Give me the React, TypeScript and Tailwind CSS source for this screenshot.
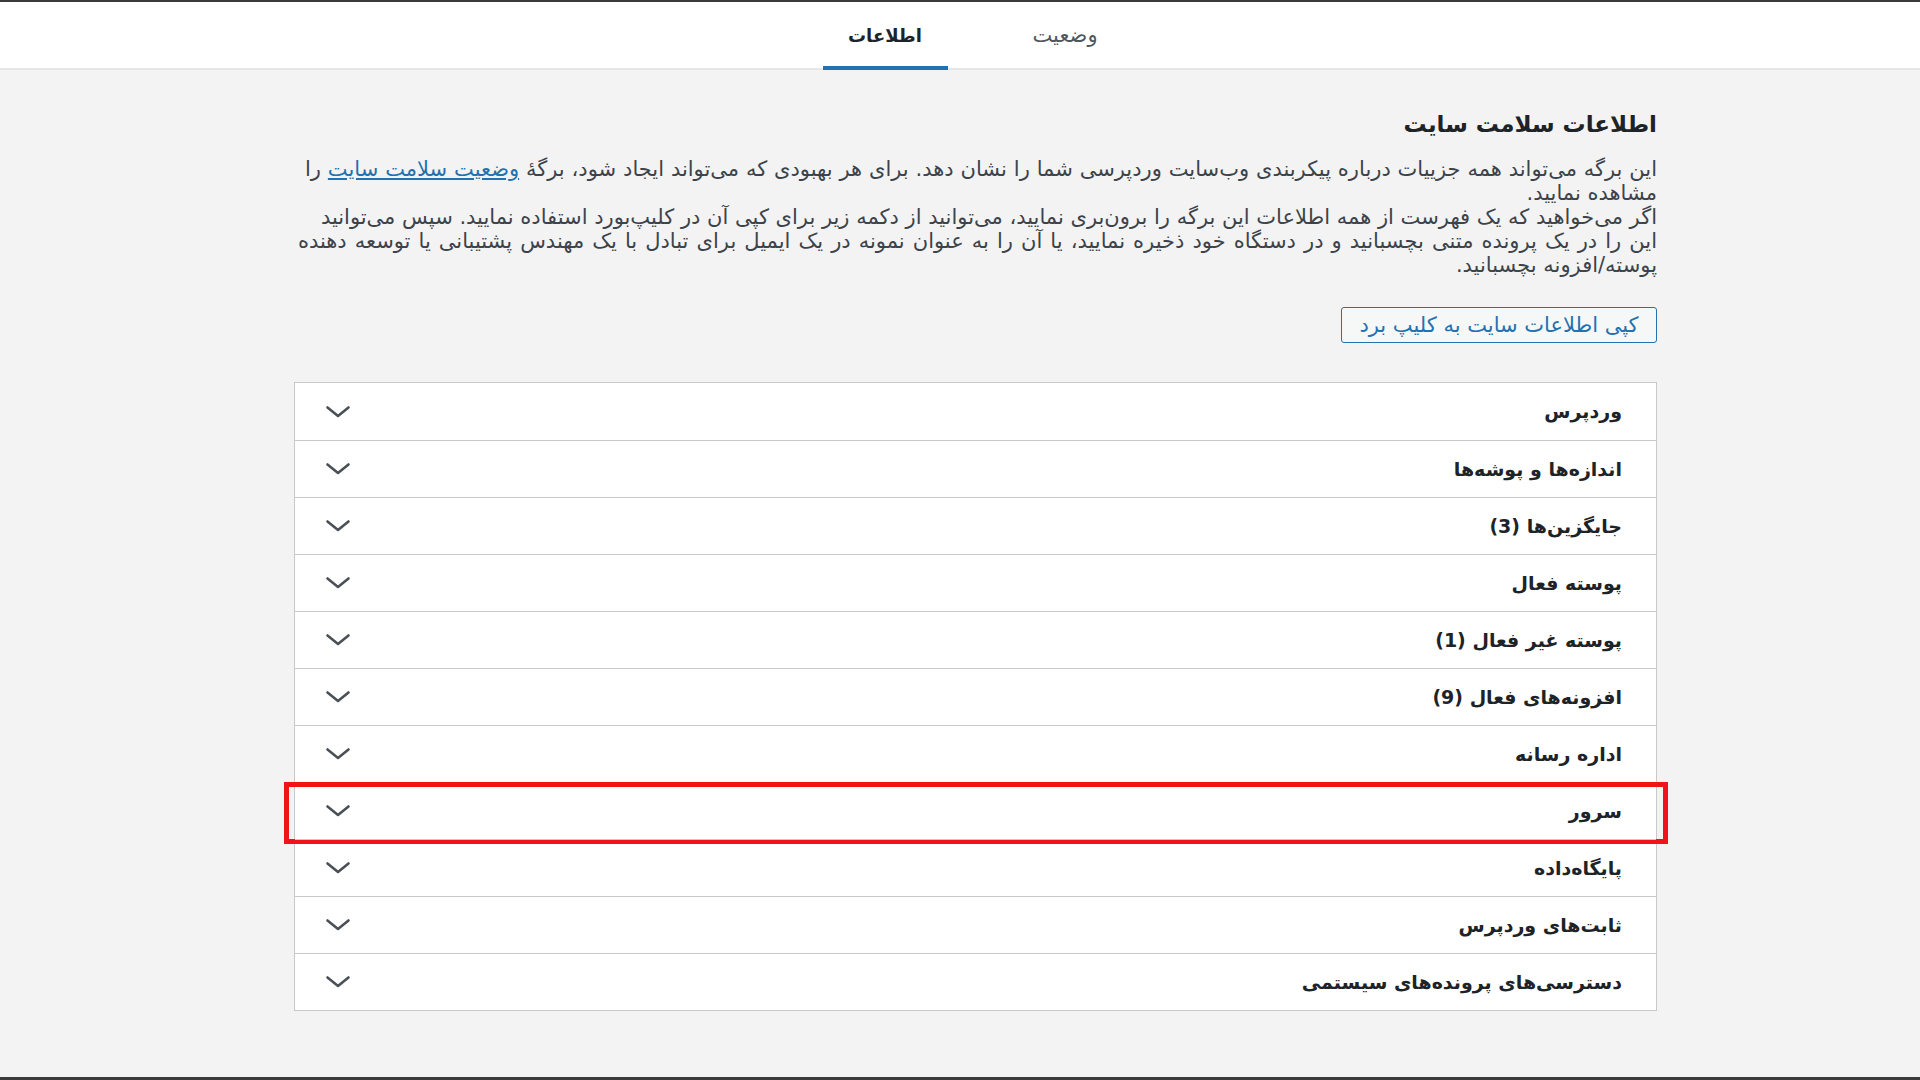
import React from 'react';

const sections = [
  'وردپرس',
  'اندازه‌ها و پوشه‌ها',
  'جایگزین‌ها (3)',
  'پوسته فعال',
  'پوسته غیر فعال (1)',
  'افزونه‌های فعال (9)',
  'اداره رسانه',
  'سرور',
  'پایگاه‌داده',
  'ثابت‌های وردپرس',
  'دسترسی‌های پرونده‌های سیستمی',
];

const Chevron = () => (
  <svg width="26" height="14" viewBox="0 0 26 14" fill="none" className="text-[#4a5056]">
    <path d="M2.5 2.5 L13 11 L23.5 2.5" stroke="currentColor" strokeWidth="2.6" strokeLinecap="round" strokeLinejoin="round" />
  </svg>
);

export default function App() {
  return (
    <div
      dir="rtl"
      className="h-screen flex flex-col bg-[#f3f3f4] border-t-2 border-b-[3px] border-[#3a3a3a] text-[#1d2327]"
      style={{ fontFamily: '"DejaVu Sans", "Liberation Sans", sans-serif' }}
    >
      {/* tabs header */}
      <div className="h-[68px] bg-white border-b-2 border-[#e6e6e7] flex justify-center items-stretch pl-[30px] gap-[55px]">
        <div className="w-[125px] flex items-center justify-center text-[21px] text-[#50575e] pt-[2px]">وضعیت</div>
        <div className="w-[125px] flex items-center justify-center text-[18px] font-bold text-[#1d2327] border-b-4 border-[#2271b1] -mb-[2px] pt-[2px]">
          اطلاعات
        </div>
      </div>

      <div className="pl-[294px] pr-[263px]">
        <h2 className="mt-[40px] text-[23px] font-bold leading-[28px] text-[#1d2327]">اطلاعات سلامت سایت</h2>

        <p className="mt-[19px] text-[21px] leading-[24px] text-[#3c434a] whitespace-nowrap">
          <span className="[word-spacing:0.2px]">
            این برگه می‌تواند همه جزییات درباره پیکربندی وب‌سایت وردپرسی شما را نشان دهد. برای هر بهبودی که می‌تواند ایجاد شود، برگهٔ{' '}
            <a className="text-[#2271b1] underline underline-offset-2">وضعیت سلامت سایت</a> را
          </span>
          <br />
          مشاهده نمایید.
          <br />
          اگر می‌خواهید که یک فهرست از همه اطلاعات این برگه را برون‌بری نمایید، می‌توانید از دکمه زیر برای کپی آن در کلیپ‌بورد استفاده نمایید. سپس می‌توانید
          <br />
          <span className="[word-spacing:1.4px]">
            این را در یک پرونده متنی بچسبانید و در دستگاه خود ذخیره نمایید، یا آن را به عنوان نمونه در یک ایمیل برای تبادل با یک مهندس پشتیبانی یا توسعه دهنده
          </span>
          <br />
          پوسته/افزونه بچسبانید.
        </p>

        <button className="mt-[30px] h-[36px] w-[316px] rounded-[3px] border border-[#2271b1] bg-[#f6f7f7] text-[#2271b1] text-[21px] leading-none">
          کپی اطلاعات سایت به کلیپ برد
        </button>

        <div className="mt-[39px] border border-[#c8c9cc] bg-white">
          {sections.map((s, i) => (
            <div
              key={s}
              className={`relative h-[57px] flex items-center justify-between pr-[34px] pl-[30px] ${i > 0 ? 'border-t border-[#c8c9cc]' : ''}`}
            >
              <span className="text-[19px] font-bold text-[#1d2327]">{s}</span>
              <Chevron />
              {s === 'سرور' && (
                <div className="absolute -left-[11px] -right-[12px] -top-[1px] -bottom-[5px] border-[5px] border-[#f01418] pointer-events-none" />
              )}
            </div>
          ))}
        </div>
      </div>
    </div>
  );
}
